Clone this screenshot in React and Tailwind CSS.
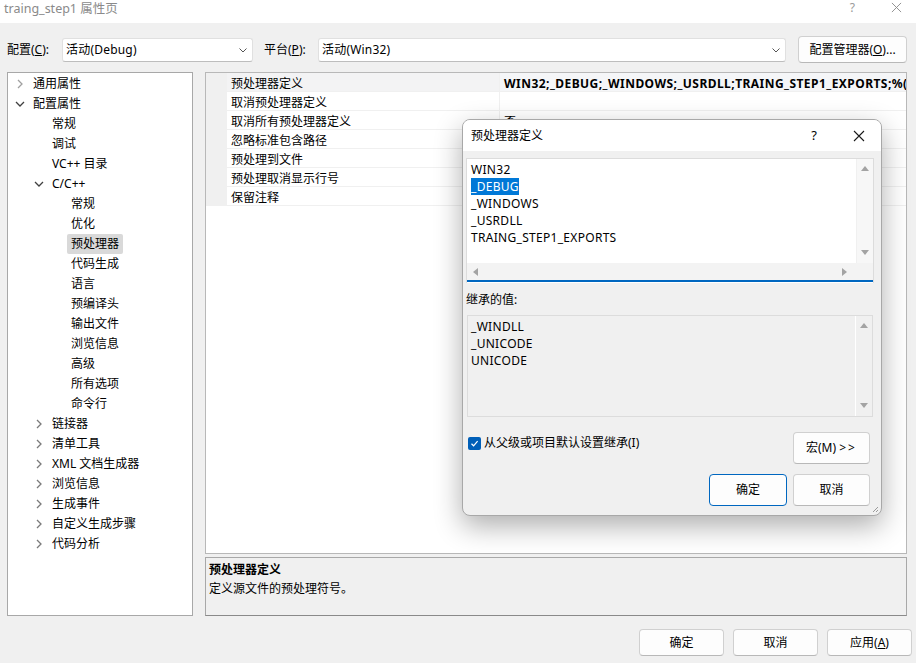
import React from "react";

const ChevRight = ({ c = "#8a8a8a" }) => (
  <svg width="12" height="12" viewBox="0 0 12 12" className="shrink-0">
    <path d="M4 2 L8 6 L4 10" fill="none" stroke={c} strokeWidth="1.3" />
  </svg>
);
const ChevDown = ({ c = "#333" }) => (
  <svg width="12" height="12" viewBox="0 0 12 12" className="shrink-0">
    <path d="M2 4 L6 8 L10 4" fill="none" stroke={c} strokeWidth="1.3" />
  </svg>
);
const SelChev = () => (
  <svg width="10" height="10" viewBox="0 0 10 10">
    <path d="M1.5 3.5 L5 7 L8.5 3.5" fill="none" stroke="#555" strokeWidth="1" />
  </svg>
);
const XIcon = ({ s = 11, c = "#222", w = 1 }) => (
  <svg width={s} height={s} viewBox="0 0 12 12">
    <path d="M1 1 L11 11 M11 1 L1 11" stroke={c} strokeWidth={w} fill="none" />
  </svg>
);
const Tri = ({ dir }) => {
  const p = {
    up: "M0 6 L4 1 L8 6 Z",
    down: "M0 1 L8 1 L4 6 Z",
    left: "M6 0 L6 8 L1 4 Z",
    right: "M1 0 L1 8 L6 4 Z",
  }[dir];
  return (
    <svg width="8" height="8" viewBox="0 0 8 8">
      <path d={p} fill="#a3a3a3" />
    </svg>
  );
};

const tree = [
  { t: "通用属性", l: 0, ch: "r", light: true },
  { t: "配置属性", l: 0, ch: "d" },
  { t: "常规", l: 1 },
  { t: "调试", l: 1 },
  { t: "VC++ 目录", l: 1 },
  { t: "C/C++", l: 1, ch: "d" },
  { t: "常规", l: 2 },
  { t: "优化", l: 2 },
  { t: "预处理器", l: 2, sel: true },
  { t: "代码生成", l: 2 },
  { t: "语言", l: 2 },
  { t: "预编译头", l: 2 },
  { t: "输出文件", l: 2 },
  { t: "浏览信息", l: 2 },
  { t: "高级", l: 2 },
  { t: "所有选项", l: 2 },
  { t: "命令行", l: 2 },
  { t: "链接器", l: 1, ch: "r" },
  { t: "清单工具", l: 1, ch: "r" },
  { t: "XML 文档生成器", l: 1, ch: "r" },
  { t: "浏览信息", l: 1, ch: "r" },
  { t: "生成事件", l: 1, ch: "r" },
  { t: "自定义生成步骤", l: 1, ch: "r" },
  { t: "代码分析", l: 1, ch: "r" },
];

const padCls = ["pl-[6px]", "pl-[25px]", "pl-[44px]"];

const props = [
  { l: "预处理器定义", v: "WIN32;_DEBUG;_WINDOWS;_USRDLL;TRAING_STEP1_EXPORTS;%(PreprocessorDefinitions)", b: true },
  { l: "取消预处理器定义", v: "" },
  { l: "取消所有预处理器定义", v: "否" },
  { l: "忽略标准包含路径", v: "" },
  { l: "预处理到文件", v: "" },
  { l: "预处理取消显示行号", v: "" },
  { l: "保留注释", v: "" },
];

const btn =
  "bg-[#fdfdfd] border border-[#d0d0d0] border-b-[#b8b8b8] rounded-[4px] leading-[16px]";

export default function App() {
  return (
    <div className="relative w-[916px] h-[663px] overflow-hidden bg-[#f0f0f0] text-[12px] text-black font-['Noto_Sans','Noto_Sans_CJK_SC',sans-serif]">
      {/* Title bar */}
      <div className="h-[23px] bg-white flex items-center pl-[4px] text-[#8a8a8a] text-[12.5px]">
        <span className="leading-[16px] -mt-[6px]">traing_step1 属性页</span>
        <div className="flex-1" />
        <span className="text-[12px] text-[#9a9a9a] -mt-[8px] mr-[36px]">?</span>
        <div className="-mt-[8px] mr-[14px]">
          <XIcon s={11} c="#8a8a8a" />
        </div>
      </div>

      {/* Config row */}
      <div className="mt-[13px] h-[27px] flex items-center">
        <span className="pl-[7px] w-[62px] leading-[16px]">
          配置(<span className="underline">C</span>):
        </span>
        <div className="w-[191px] h-[24px] bg-white border border-[#e0e0e0] border-b-[#bdbdbd] rounded-[3px] flex items-center pl-[3px] pr-[4px]">
          <span className="flex-1 leading-[16px] tracking-[0.2px]">活动(Debug)</span>
          <SelChev />
        </div>
        <span className="ml-[11px] w-[54px] leading-[16px]">
          平台(<span className="underline">P</span>):
        </span>
        <div className="w-[468px] h-[24px] bg-white border border-[#e0e0e0] border-b-[#bdbdbd] rounded-[3px] flex items-center pl-[3px] pr-[4px]">
          <span className="flex-1 leading-[16px] tracking-[0.2px]">活动(Win32)</span>
          <SelChev />
        </div>
        <button className={`ml-[12px] w-[109px] h-[27px] ${btn}`}>
          配置管理器(<span className="underline">O</span>)...
        </button>
      </div>

      {/* Main area */}
      <div className="mt-[9px] flex h-[544px]">
        {/* Tree */}
        <div className="ml-[7px] w-[186px] h-full bg-white border border-[#a8a8a8] pt-[1px] overflow-hidden">
          {tree.map((n, i) => (
            <div key={i} className={`h-[20px] flex items-center ${padCls[n.l]}`}>
              <div className="w-[12px] h-[12px] shrink-0">
                {n.ch === "r" && <ChevRight c={n.light ? "#a0a0a0" : "#7a7a7a"} />}
                {n.ch === "d" && <ChevDown c="#404040" />}
              </div>
              {n.sel ? (
                <span className="ml-[3px] px-[4px] h-[20px] leading-[20px] whitespace-nowrap bg-[#d9d9d9] rounded-[2px]">
                  {n.t}
                </span>
              ) : (
                <span className="ml-[7px] leading-[20px] whitespace-nowrap">{n.t}</span>
              )}
            </div>
          ))}
        </div>

        {/* Right column */}
        <div className="ml-[12px] w-[702px] h-full flex flex-col">
          <div className="h-[482px] bg-white border border-[#b8b8b8] overflow-hidden">
            {props.map((p, i) => (
              <div key={i} className="flex h-[19px] border-b border-[#f0f0f0]">
                <div className="w-[21px] shrink-0 bg-[#f0f0f0]" />
                <div
                  className={`w-[273px] shrink-0 pl-[4px] pt-[3px] border-r border-[#f0f0f0] leading-[15px] whitespace-nowrap ${
                    i === 0 ? "bg-[#f3f3f4]" : ""
                  }`}
                >
                  {p.l}
                </div>
                <div
                  className={`flex-1 pl-[4px] pt-[3px] leading-[15px] whitespace-nowrap overflow-hidden ${
                    p.b ? "font-bold bg-[#f5f6f8] tracking-[0.45px]" : ""
                  }`}
                >
                  {p.v}
                </div>
              </div>
            ))}
          </div>
          <div className="mt-[3px] h-[59px] bg-[#f0f0f0] border border-[#a8a8a8] border-b-[#8a8a8a] pl-[3px] pt-[2px]">
            <div className="font-bold leading-[19px]">预处理器定义</div>
            <div className="leading-[19px]">定义源文件的预处理符号。</div>
          </div>
        </div>
      </div>

      {/* Bottom buttons */}
      <div className="mt-[13px] flex justify-end pr-[4px] gap-[9px]">
        <button className={`w-[85px] h-[27px] ${btn}`}>确定</button>
        <button className={`w-[85px] h-[27px] ${btn}`}>取消</button>
        <button className={`w-[85px] h-[27px] ${btn}`}>
          应用(<span className="underline">A</span>)
        </button>
      </div>

      {/* Dialog */}
      <div className="absolute left-[462px] top-[119px] w-[420px] h-[397px] bg-[#f0f0f0] border border-[#a8a8a8] rounded-[8px] shadow-[0_10px_28px_rgba(0,0,0,0.32)] overflow-hidden flex flex-col">
        <div className="h-[31px] bg-white flex items-center pl-[8px] shrink-0">
          <span className="flex-1 leading-[16px]">预处理器定义</span>
          <span className="text-[13px] mr-[36px]">?</span>
          <div className="mr-[16px]">
            <XIcon s={12} c="#1a1a1a" w={1.1} />
          </div>
        </div>

        <div className="pl-[3px] pr-[7px] pt-[7px]">
          {/* List 1 */}
          <div className="h-[125px] bg-white border border-[#dcdcdc] border-b-0 flex flex-col">
            <div className="flex h-[104px]">
              <div className="flex-1 pt-[2px] pl-[4px] tracking-[0.3px]">
                {["WIN32", "_DEBUG", "_WINDOWS", "_USRDLL", "TRAING_STEP1_EXPORTS"].map((t, i) => (
                  <div key={i} className="h-[17px] leading-[17px]">
                    <span className={i === 1 ? "bg-[#0078d7] text-white inline-block h-[17px]" : ""}>{t}</span>
                  </div>
                ))}
              </div>
              <div className="w-[17px] bg-[#f7f7f7] border-l border-[#f0f0f0] flex flex-col items-center justify-between py-[6px]">
                <Tri dir="up" />
                <Tri dir="down" />
              </div>
            </div>
            <div className="h-[17px] bg-[#f3f3f3] flex items-center justify-between pl-[5px] pr-[24px]">
              <Tri dir="left" />
              <Tri dir="right" />
            </div>
            <div className="h-[2px] bg-[#0067c0]" />
          </div>

          <div className="mt-[9px] leading-[16px]">继承的值:</div>

          {/* List 2 */}
          <div className="mt-[7px] ml-[1px] mr-[1px] h-[102px] bg-[#f0f0f0] border border-[#dcdcdc] flex">
            <div className="flex-1 pt-[2px] pl-[3px] tracking-[0.3px]">
              {["_WINDLL", "_UNICODE", "UNICODE"].map((t, i) => (
                <div key={i} className="h-[17px] leading-[17px]">
                  {t}
                </div>
              ))}
            </div>
            <div className="w-[17px] border-l border-white flex flex-col items-center justify-between py-[6px]">
              <Tri dir="up" />
              <Tri dir="down" />
            </div>
          </div>

          {/* Checkbox + macro */}
          <div className="mt-[15px] flex items-start">
            <div className="ml-[2px] mt-[5px] w-[13px] h-[13px] rounded-[2px] bg-[#005fb8] flex items-center justify-center">
              <svg width="9" height="9" viewBox="0 0 9 9">
                <path d="M1.5 4.8 L3.6 6.8 L7.6 2.2" fill="none" stroke="white" strokeWidth="1.2" />
              </svg>
            </div>
            <span className="ml-[3px] mt-[3px] leading-[16px]">从父级或项目默认设置继承(I)</span>
            <div className="flex-1" />
            <button className={`mr-[4px] w-[77px] h-[32px] ${btn}`}>
              宏(M) <span className="tracking-[2px]">&gt;&gt;</span>
            </button>
          </div>

          {/* OK / Cancel */}
          <div className="mt-[10px] flex justify-end gap-[6px] mr-[4px]">
            <button className="w-[78px] h-[32px] bg-[#fdfdfd] border border-[#0067c0] rounded-[4px] leading-[16px]">
              确定
            </button>
            <button className={`w-[77px] h-[32px] ${btn}`}>取消</button>
          </div>
        </div>

        {/* resize grip */}
        <svg className="absolute right-[2px] bottom-[2px]" width="8" height="8" viewBox="0 0 8 8">
          <path d="M7 2 L2 7 M7 5 L5 7" stroke="#9a9a9a" strokeWidth="1" />
        </svg>
      </div>
    </div>
  );
}
